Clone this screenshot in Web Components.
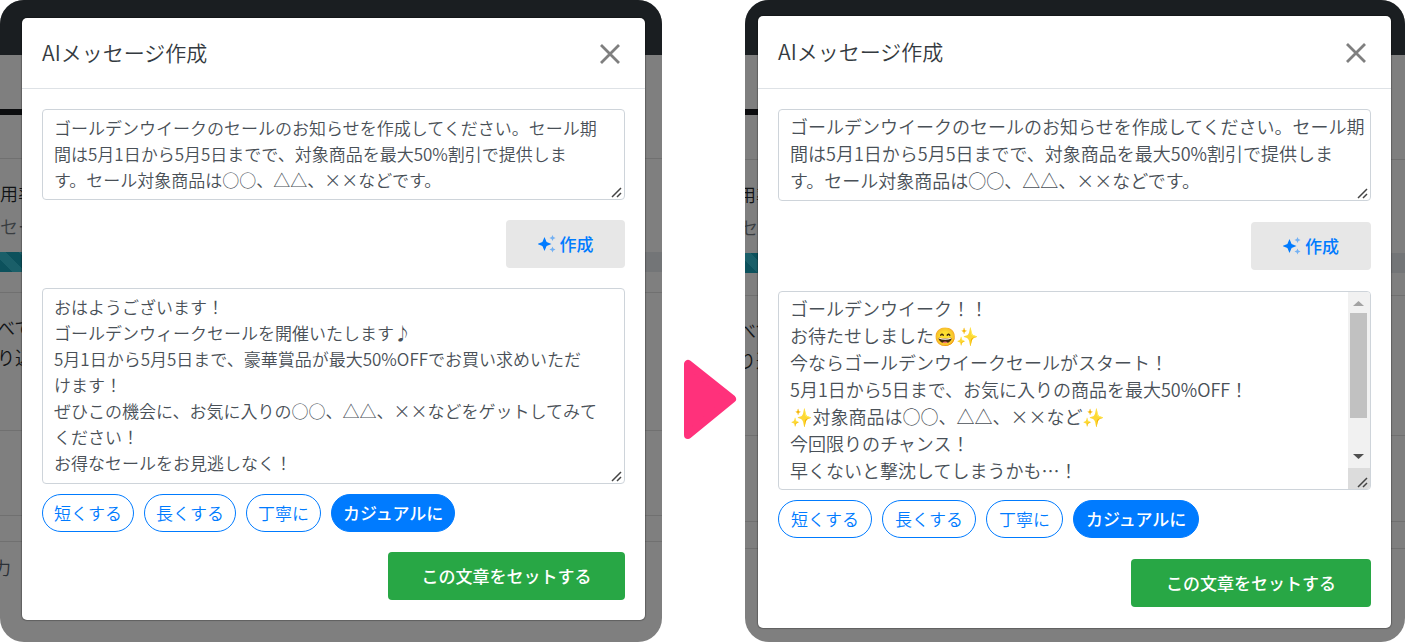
<!DOCTYPE html>
<html lang="ja">
<head>
<meta charset="utf-8">
<title>AIメッセージ作成</title>
<style>
body { margin: 0; background: #fff; font-family: "Noto Sans CJK JP", "Noto Sans", sans-serif; color: #495057; }
.wide { --fs: 18px; --lh: 27px; --pad-top: 3px; --pad-right: 2px; --prompt-h: 92px; --result-h: 199px; --title-h: 73px; --inset: 16px 14px 14px 13px; --gap: 21px; --chip-pad: 12px; --footer-gap: 21px; --set-w: 240px; --make-w: 120px; --shift: -7px; --shift-small: -5px; --shift-last: -17px; --band: 44px; --row: 136px; --filter: 140px; --space: 86px; --strip: 27px; }
</style>
</head>
<body>
<before-after>
  <app-screen slot="before">
    <message-dialog heading="AIメッセージ作成">
      <note-field slot="prompt" kind="prompt" label="作成する内容">ゴールデンウイークのセールのお知らせを作成してください。セール期
間は5月1日から5月5日までで、対象商品を最大50%割引で提供しま
す。セール対象商品は○○、△△、××などです。</note-field>
      <note-field slot="result" kind="result" label="作成された文章">おはようございます！
ゴールデンウィークセールを開催いたします♪
5月1日から5月5日まで、豪華賞品が最大50%OFFでお買い求めいただ
けます！
ぜひこの機会に、お気に入りの○○、△△、××などをゲットしてみて
ください！
お得なセールをお見逃しなく！</note-field>
    </message-dialog>
  </app-screen>
  <app-screen slot="after" class="wide">
    <message-dialog heading="AIメッセージ作成">
      <note-field slot="prompt" kind="prompt" label="作成する内容">ゴールデンウイークのセールのお知らせを作成してください。セール期
間は5月1日から5月5日までで、対象商品を最大50%割引で提供しま
す。セール対象商品は○○、△△、××などです。</note-field>
      <note-field slot="result" kind="result" label="作成された文章" scroll>ゴールデンウイーク！！
お待たせしました😄✨
今ならゴールデンウイークセールがスタート！
5月1日から5日まで、お気に入りの商品を最大50%OFF！
✨対象商品は○○、△△、××など✨
今回限りのチャンス！
早くないと撃沈してしまうかも…！</note-field>
    </message-dialog>
  </app-screen>
</before-after>
<script>
const define = (name, html, setup) => {
  const template = document.createElement('template');
  template.innerHTML = html;
  customElements.define(name, class extends HTMLElement {
    constructor() {
      super();
      this.attachShadow({ mode: 'open' }).append(template.content.cloneNode(true));
    }
    connectedCallback() { if (setup) setup(this, this.shadowRoot); }
  });
};

define('before-after', `
<style>
:host { display: grid; grid-template-columns: 662fr 83px 660fr; min-height: 100vh; }
.arrow { align-self: center; justify-self: center; margin-top: 157px; margin-left: 11px; }
svg { display: block; }
::slotted(*) { min-width: 0; }
</style>
<slot name="before"></slot>
<div class="arrow"><svg width="64" height="82" viewBox="0 0 64 82"><path d="M11 5V76L55 40Z" fill="#ff317b" stroke="#ff317b" stroke-width="8" stroke-linejoin="round"/></svg></div>
<slot name="after"></slot>`);

define('app-screen', `
<style>
:host { display: grid; border-radius: 24px; overflow: hidden; background: #7f7f7f; }
.page, .front { grid-area: 1 / 1; min-width: 0; }
.page { display: flex; flex-direction: column; font-size: 18px; line-height: 30px; font-weight: 350; color: #111315; white-space: nowrap; overflow: hidden; }
.nav { height: 55px; background: #1a1e21; }
.sub { height: 54px; }
.tab { height: 6px; width: 50%; background: #0c0d0f; }
.band { height: var(--band, 43px); }
.row { box-sizing: border-box; border-top: 1px solid #707070; }
.usage { height: var(--row, 134px); padding-top: 19px; }
.usage div { text-indent: var(--shift, 0px); }
.usage .small { color: #393d41; text-indent: var(--shift-small, 0px); margin-top: 3px; }
.meter { margin-top: 11px; height: 20px; background: #737577; }
.fill { height: 20px; width: 50%; background: repeating-linear-gradient(45deg, #0c515c 0 9px, #1a5f69 9px 18px); }
.filter { height: var(--filter, 138px); padding-top: 19px; text-indent: var(--shift, -3px); }
.space { height: var(--space, 85px); }
.strip { height: var(--strip, 26px); }
.last { flex: 1; padding-top: 10px; color: #2b3036; text-indent: var(--shift-last, -7px); }
.front { display: flex; padding: var(--inset, 18px 17px 22px 22px); }
</style>
<div class="page" aria-hidden="true">
  <div class="nav"></div><div class="sub"></div><div class="tab"></div><div class="band"></div>
  <div class="row usage"><div>用率</div><div class="small">セー</div><div class="meter"><div class="fill"></div></div></div>
  <div class="row filter"><div>べて</div><div>り込</div></div>
  <div class="row space"></div><div class="row strip"></div><div class="row last">力</div>
</div>
<div class="front"><slot></slot></div>`);

define('message-dialog', `
<style>
:host { flex: 1; min-width: 0; display: flex; flex-direction: column; box-sizing: border-box; background: #fff; border-radius: 5px; box-shadow: 0 0 1px 1px rgba(0, 0, 0, .25); }
header { display: flex; align-items: center; justify-content: space-between; box-sizing: border-box; height: var(--title-h, 71px); padding: 0 20px; border-bottom: 1px solid #dee2e6; }
h2 { margin: 0 0 2px; font-size: 21px; line-height: 32px; font-weight: 350; color: #343a40; }
.close { border: 0; background: none; padding: 2px 5px 0; cursor: pointer; }
svg { display: block; }
main { display: flex; flex-direction: column; padding: 20px; flex: 1; }
.make { align-self: flex-end; margin: var(--gap, 20px) 0; width: var(--make-w, 119px); }
.tones { display: flex; gap: 10px; margin-top: 10px; }
.set { align-self: flex-end; margin-top: var(--footer-gap, 20px); width: var(--set-w, 237px); }
</style>
<header><h2></h2><button class="close" aria-label="閉じる"><svg width="20" height="20" viewBox="0 0 20 20"><path d="M1 1L19 19M19 1L1 19" fill="none" stroke="#7f7f7f" stroke-width="2.8"/></svg></button></header>
<main>
  <slot name="prompt"></slot>
  <action-button class="make" tone="light"><svg slot="icon" width="18" height="18" viewBox="0 0 18 18" fill="#007bff"><path d="M6.500 2L8.600 6.900L13.500 9L8.600 11.100L6.500 16L4.400 11.100L-.5 9L4.400 6.900Z"/><path opacity=".5" d="M14.500 0L15.400 2.100L17.500 3L15.400 3.900L14.500 6L13.600 3.900L11.500 3L13.600 2.100ZM14.500 11.500L15.400 13.600L17.500 14.500L15.400 15.400L14.500 17.500L13.600 15.400L11.500 14.500L13.600 13.600Z"/></svg>作成</action-button>
  <slot name="result"></slot>
  <div class="tones"><tone-chip>短くする</tone-chip><tone-chip>長くする</tone-chip><tone-chip>丁寧に</tone-chip><tone-chip selected>カジュアルに</tone-chip></div>
  <action-button class="set" tone="green">この文章をセットする</action-button>
</main>`, (host, root) => { root.querySelector('h2').textContent = host.getAttribute('heading'); });

define('action-button', `
<style>
:host { display: block; }
button { width: 100%; height: 48px; display: flex; align-items: center; justify-content: center; gap: 4px; border: 0; border-radius: 4px; padding: 0; font: 500 17px/26px "Noto Sans CJK JP", sans-serif; background: #e7e7e7; color: #007bff; cursor: pointer; }
:host([tone="green"]) button { background: #28a745; color: #fff; }
</style>
<button type="button"><slot name="icon"></slot><span><slot></slot></span></button>`);

define('tone-chip', `
<style>
:host { display: block; }
button { height: 38px; border: 1px solid #007bff; border-radius: 19px; padding: 0 var(--chip-pad, 11px); background: #fff; color: #007bff; font: 350 17px/26px "Noto Sans CJK JP", sans-serif; cursor: pointer; white-space: nowrap; }
:host([selected]) button { background: #007bff; color: #fff; font-weight: 500; }
</style>
<button type="button"><slot></slot></button>`, (host, root) => {
  root.querySelector('button').setAttribute('aria-pressed', host.hasAttribute('selected'));
});

define('note-field', `
<style>
:host { display: flex; position: relative; box-sizing: border-box; height: var(--prompt-h, 91px); border: 1px solid #ced4da; border-radius: 4px; overflow: hidden; background: #fff; }
:host([kind="result"]) { height: var(--result-h, 196px); }
textarea { flex: 1; min-width: 0; box-sizing: border-box; margin: 0; border: 0; outline: 0; padding: var(--pad-top, 5px) var(--pad-right, 11px) 4px 11px; resize: none; overflow: hidden; background: none; color: #495057; font: 350 var(--fs, 17px)/var(--lh, 26px) "Noto Sans CJK JP", "Noto Color Emoji", sans-serif; line-break: strict; }
.grip { position: absolute; right: 1px; bottom: 1px; }
.bar { display: none; flex-direction: column; width: 22px; background: #f1f1f1; }
:host([scroll]) .bar { display: flex; }
.bar svg { display: block; flex: none; }
.track { flex: 1; }
.thumb { height: 105px; margin: 0 3px 0 2px; background: #c1c1c1; }
.corner { height: 21px; background: #dcdcdc; }
</style>
<textarea spellcheck="false"></textarea>
<div class="bar"><svg width="22" height="21" viewBox="0 0 22 21"><path d="M5 14H16L10.500 9Z" fill="#a3a3a3"/></svg><div class="track"><div class="thumb"></div></div><svg width="22" height="21" viewBox="0 0 22 21"><path d="M5 7H16L10.500 12Z" fill="#505050"/></svg><div class="corner"></div></div>
<svg class="grip" width="12" height="12" viewBox="0 0 12 12"><path d="M1 11L10 2M6 11L10 7" fill="none" stroke="#444" stroke-width="1.500"/></svg>`, (host, root) => {
  const area = root.querySelector('textarea');
  area.setAttribute('aria-label', host.getAttribute('label'));
  area.value = host.textContent;
});
</script>
</body>
</html>
